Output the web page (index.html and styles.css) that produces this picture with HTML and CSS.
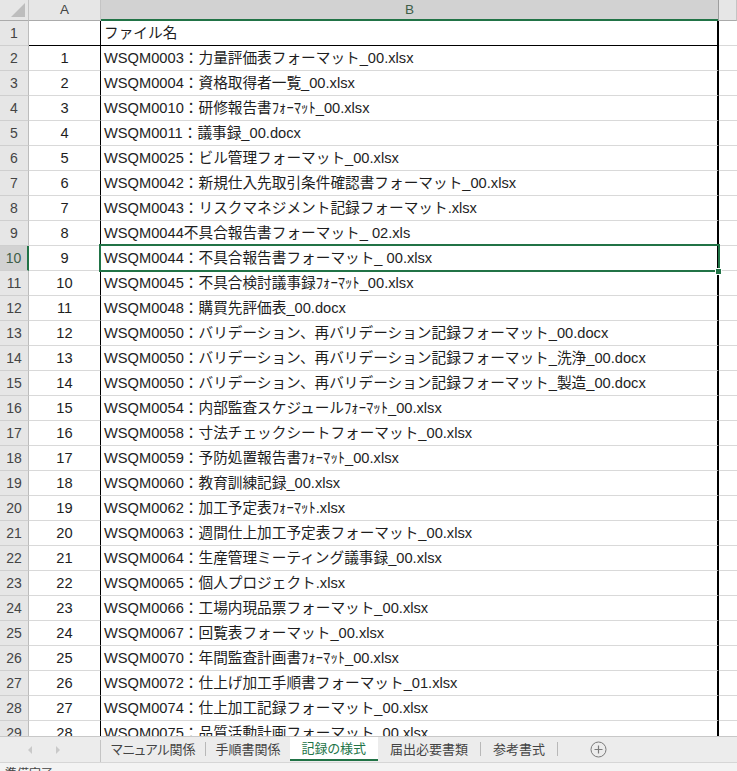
FILE: index.html
```html
<!DOCTYPE html>
<html lang="ja">
<head>
<meta charset="utf-8">
<title>記録の様式</title>
<link rel="stylesheet" href="styles.css">
</head>
<body>
<div class="app">
  <div class="sheet">
    <div class="row head">
      <div class="corner"><span class="tri"></span></div>
      <div class="ch">A</div>
      <div class="ch sel">B</div>
      <div class="ch"></div>
    </div>
    <div class="row r1"><div class="rh">1</div><div class="a"></div><div class="b">ファイル名</div><div class="c"></div></div>
    <div class="row"><div class="rh">2</div><div class="a">1</div><div class="b">WSQM0003：力量評価表フォーマット_00.xlsx</div><div class="c"></div></div>
    <div class="row"><div class="rh">3</div><div class="a">2</div><div class="b">WSQM0004：資格取得者一覧_00.xlsx</div><div class="c"></div></div>
    <div class="row"><div class="rh">4</div><div class="a">3</div><div class="b">WSQM0010：研修報告書ﾌｫｰﾏｯﾄ_00.xlsx</div><div class="c"></div></div>
    <div class="row"><div class="rh">5</div><div class="a">4</div><div class="b">WSQM0011：議事録_00.docx</div><div class="c"></div></div>
    <div class="row"><div class="rh">6</div><div class="a">5</div><div class="b">WSQM0025：ビル管理フォーマット_00.xlsx</div><div class="c"></div></div>
    <div class="row"><div class="rh">7</div><div class="a">6</div><div class="b">WSQM0042：新規仕入先取引条件確認書フォーマット_00.xlsx</div><div class="c"></div></div>
    <div class="row"><div class="rh">8</div><div class="a">7</div><div class="b">WSQM0043：リスクマネジメント記録フォーマット.xlsx</div><div class="c"></div></div>
    <div class="row"><div class="rh">9</div><div class="a">8</div><div class="b">WSQM0044不具合報告書フォーマット_ 02.xls</div><div class="c"></div></div>
    <div class="row cur"><div class="rh">10</div><div class="a">9</div><div class="b active">WSQM0044：不具合報告書フォーマット_ 00.xlsx<span class="handle"></span></div><div class="c"></div></div>
    <div class="row"><div class="rh">11</div><div class="a">10</div><div class="b">WSQM0045：不具合検討議事録ﾌｫｰﾏｯﾄ_00.xlsx</div><div class="c"></div></div>
    <div class="row"><div class="rh">12</div><div class="a">11</div><div class="b">WSQM0048：購買先評価表_00.docx</div><div class="c"></div></div>
    <div class="row"><div class="rh">13</div><div class="a">12</div><div class="b">WSQM0050：バリデーション、再バリデーション記録フォーマット_00.docx</div><div class="c"></div></div>
    <div class="row"><div class="rh">14</div><div class="a">13</div><div class="b">WSQM0050：バリデーション、再バリデーション記録フォーマット_洗浄_00.docx</div><div class="c"></div></div>
    <div class="row"><div class="rh">15</div><div class="a">14</div><div class="b">WSQM0050：バリデーション、再バリデーション記録フォーマット_製造_00.docx</div><div class="c"></div></div>
    <div class="row"><div class="rh">16</div><div class="a">15</div><div class="b">WSQM0054：内部監査スケジュールﾌｫｰﾏｯﾄ_00.xlsx</div><div class="c"></div></div>
    <div class="row"><div class="rh">17</div><div class="a">16</div><div class="b">WSQM0058：寸法チェックシートフォーマット_00.xlsx</div><div class="c"></div></div>
    <div class="row"><div class="rh">18</div><div class="a">17</div><div class="b">WSQM0059：予防処置報告書ﾌｫｰﾏｯﾄ_00.xlsx</div><div class="c"></div></div>
    <div class="row"><div class="rh">19</div><div class="a">18</div><div class="b">WSQM0060：教育訓練記録_00.xlsx</div><div class="c"></div></div>
    <div class="row"><div class="rh">20</div><div class="a">19</div><div class="b">WSQM0062：加工予定表ﾌｫｰﾏｯﾄ.xlsx</div><div class="c"></div></div>
    <div class="row"><div class="rh">21</div><div class="a">20</div><div class="b">WSQM0063：週間仕上加工予定表フォーマット_00.xlsx</div><div class="c"></div></div>
    <div class="row"><div class="rh">22</div><div class="a">21</div><div class="b">WSQM0064：生産管理ミーティング議事録_00.xlsx</div><div class="c"></div></div>
    <div class="row"><div class="rh">23</div><div class="a">22</div><div class="b">WSQM0065：個人プロジェクト.xlsx</div><div class="c"></div></div>
    <div class="row"><div class="rh">24</div><div class="a">23</div><div class="b">WSQM0066：工場内現品票フォーマット_00.xlsx</div><div class="c"></div></div>
    <div class="row"><div class="rh">25</div><div class="a">24</div><div class="b">WSQM0067：回覧表フォーマット_00.xlsx</div><div class="c"></div></div>
    <div class="row"><div class="rh">26</div><div class="a">25</div><div class="b">WSQM0070：年間監査計画書ﾌｫｰﾏｯﾄ_00.xlsx</div><div class="c"></div></div>
    <div class="row"><div class="rh">27</div><div class="a">26</div><div class="b">WSQM0072：仕上げ加工手順書フォーマット_01.xlsx</div><div class="c"></div></div>
    <div class="row"><div class="rh">28</div><div class="a">27</div><div class="b">WSQM0074：仕上加工記録フォーマット_00.xlsx</div><div class="c"></div></div>
    <div class="row"><div class="rh">29</div><div class="a">28</div><div class="b">WSQM0075：品質活動計画フォーマット_00.xlsx</div><div class="c"></div></div>
  </div>
  <div class="tabs">
    <div class="nav">
      <span class="arrow left"></span>
      <span class="arrow right"></span>
    </div>
    <span class="sep tall"></span>
    <div class="tab">マニュアル関係</div>
    <span class="sep"></span>
    <div class="tab">手順書関係</div>
    <div class="tab on">記録の様式</div>
    <div class="tab wide">届出必要書類</div>
    <span class="sep"></span>
    <div class="tab wide">参考書式</div>
    <span class="sep"></span>
    <div class="add">
      <svg width="17" height="17" viewBox="0 0 17 17"><circle cx="8.5" cy="8.5" r="7.5" fill="none" stroke="#7a7a7a" stroke-width="1"/><path d="M8.5 4.5v8M4.5 8.5h8" stroke="#7a7a7a" stroke-width="1.2"/></svg>
    </div>
  </div>
  <div class="status">準備完了</div>
</div>
</body>
</html>
```

FILE: styles.css
```css
* { box-sizing: border-box; }
html, body { margin: 0; padding: 0; }
body {
  width: 737px;
  height: 771px;
  overflow: hidden;
  background: #ffffff;
  font-family: "Liberation Sans", "Noto Sans CJK JP", sans-serif;
  color: #1e1e1e;
}
.app {
  display: flex;
  flex-direction: column;
  height: 771px;
}
.sheet {
  height: 736px;
  overflow: hidden;
  flex: none;
}
.row {
  display: grid;
  grid-template-columns: 29px 72px 618px 1fr;
  height: 25px;
  font-size: 14.667px;
  line-height: 24px;
  white-space: nowrap;
}
.row.head {
  height: 21px;
  font-size: 13.5px;
  line-height: 18px;
  color: #444;
}
.corner {
  background: #e6e6e6;
  border-right: 1px solid #c4c4c4;
  border-bottom: 1px solid #ababab;
  display: flex;
  align-items: flex-end;
  justify-content: flex-end;
  padding: 0 3px 3px 0;
}
.tri {
  width: 0;
  height: 0;
  border-left: 14px solid transparent;
  border-bottom: 14px solid #bdbdbd;
}
.ch {
  background: #e6e6e6;
  border-right: 1px solid #c4c4c4;
  border-bottom: 1px solid #ababab;
  text-align: center;
  padding-top: 1px;
}
.ch.sel {
  background: #d2d2d2;
  color: #3e5e48;
  border-bottom: 0;
  box-shadow: inset 0 -2px 0 #217346;
  border-right-color: #9e9e9e;
}
.rh {
  background: #e6e6e6;
  border-right: 1px solid #bcbcbc;
  border-bottom: 1px solid #cfcfcf;
  text-align: center;
  color: #444;
  font-size: 14px;
}
.cur .rh {
  background: #d2d2d2;
  color: #3e5e48;
  border-right: 2px solid #217346;
}
.a {
  border-right: 1px solid #000;
  border-bottom: 1px solid #d9d9d9;
  text-align: center;
}
.b {
  border-right: 2px solid #000;
  border-bottom: 1px solid #d9d9d9;
  padding-left: 3px;
}
.c {
  border-bottom: 1px solid #d9d9d9;
}
.r1 .a, .r1 .b {
  border-bottom-color: #000;
}
.b.active {
  position: relative;
}
.b.active::after {
  content: "";
  position: absolute;
  top: -2px;
  left: -2px;
  right: -3px;
  bottom: -2px;
  border: 2px solid #217346;
}
.handle {
  position: absolute;
  right: -5px;
  bottom: -5px;
  width: 7px;
  height: 7px;
  background: #217346;
  border: 1px solid #ffffff;
  z-index: 2;
}

/* sheet tabs */
.tabs {
  height: 26px;
  flex: none;
  display: flex;
  align-items: stretch;
  background: #ececec;
  border-top: 1px solid #c8c8c8;
  font-family: "Noto Sans CJK JP", sans-serif;
  font-size: 13px;
  font-feature-settings: "palt";
  color: #444;
}
.nav {
  width: 100px;
  flex: none;
  display: flex;
  align-items: center;
  padding-left: 28px;
  gap: 24px;
}
.arrow {
  width: 0;
  height: 0;
  border-top: 4px solid transparent;
  border-bottom: 4px solid transparent;
}
.arrow.left { border-right: 4px solid #c9c9c9; }
.arrow.right { border-left: 4px solid #c9c9c9; }
.sep {
  width: 1px;
  flex: none;
  background: #b8b8b8;
  margin: 5px 0 6px;
}
.sep.tall {
  margin: 3px 0 0;
  background: #c4c4c4;
}
.tab {
  padding: 0 9px 2px 10px;
  display: flex;
  align-items: center;
  line-height: 16px;
}
.tab.wide {
  padding: 0 12px 2px 12px;
}
.tab.on {
  background: #ffffff;
  color: #217346;
  padding: 0 12px;
  border-bottom: 2px solid #217346;
  margin-bottom: 1px;
}
.add {
  display: flex;
  align-items: center;
  margin-left: 32px;
  padding-bottom: 1px;
}
.add svg { display: block; }
.status {
  flex: 1;
  background: #f3f3f3;
  border-top: 1px solid #d6d6d6;
  font-family: "Noto Sans CJK JP", sans-serif;
  font-size: 12px;
  line-height: 16px;
  padding: 2px 0 0 5px;
  color: #444;
}
```
